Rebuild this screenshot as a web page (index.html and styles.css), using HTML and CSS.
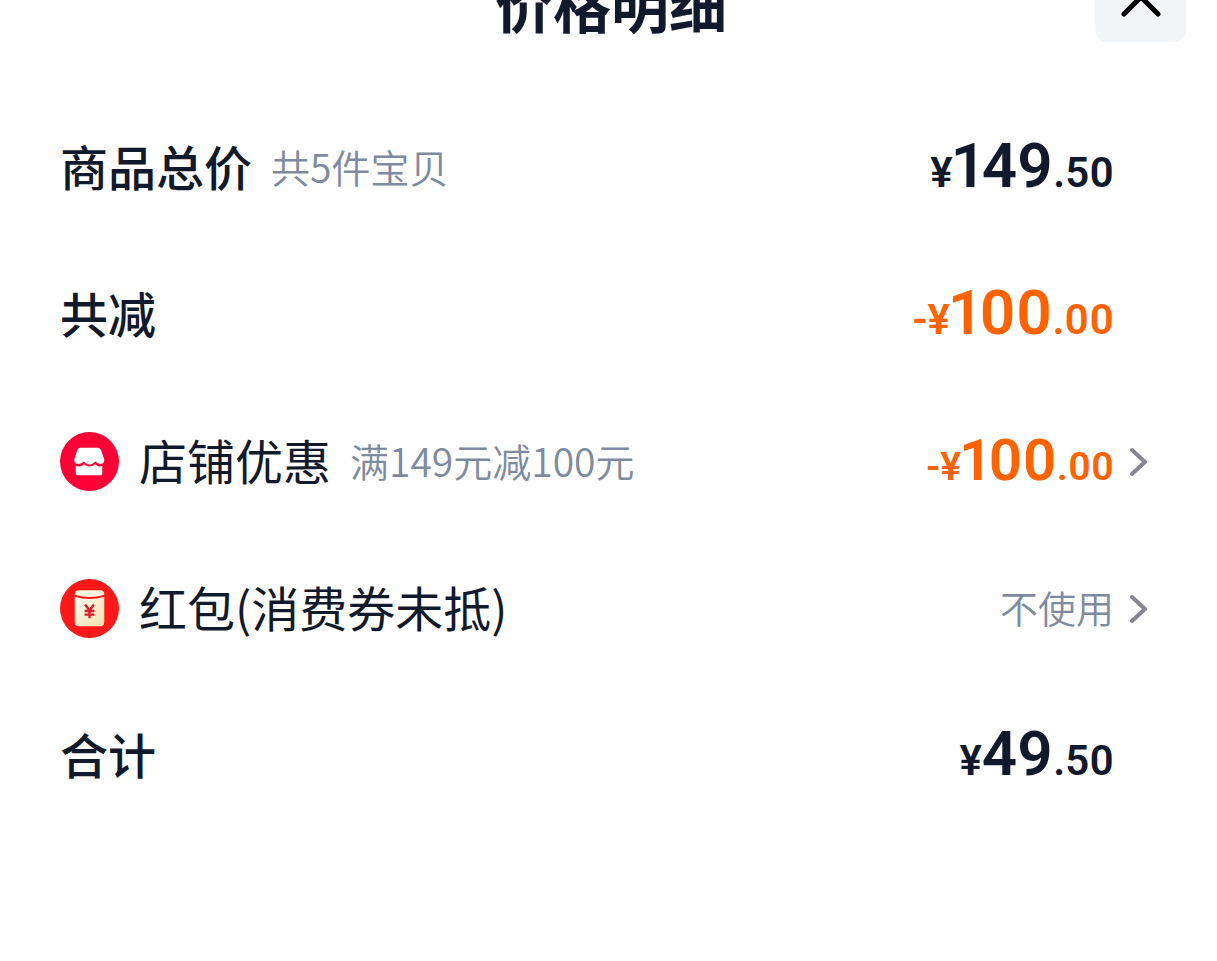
FILE: index.html
```html
<!DOCTYPE html>
<html lang="zh-CN">
<head>
<meta charset="utf-8">
<meta name="viewport" content="width=device-width, initial-scale=1">
<title>价格明细</title>
<link rel="stylesheet" href="styles.css">
</head>
<body>
<main class="sheet">
  <header class="header">
    <h1 class="title">价格明细</h1>
    <button class="close" type="button" aria-label="关闭">
      <svg class="close-icon" viewBox="0 0 44 44" aria-hidden="true"><path d="M5 5l34 34M39 5L5 39"/></svg>
    </button>
  </header>
  <ul class="rows">
    <li class="row">
      <span class="label strong">商品总价</span>
      <span class="note">共5件宝贝</span>
      <span class="price"><span class="yen">¥</span><span class="whole">149</span><span class="cents">.50</span></span>
    </li>
    <li class="row">
      <span class="label strong">共减</span>
      <span class="price discount"><span class="minus">-</span><span class="yen">¥</span><span class="whole">100</span><span class="cents">.00</span></span>
    </li>
    <li class="row">
      <svg class="badge" viewBox="0 0 60 60" aria-hidden="true">
        <circle cx="30" cy="30" r="30" fill="#ff0036"/>
        <path fill="#fff" d="M21 16h17q3 0 4 3l3 9q0 4.500-4 4.500-3 0-5.200-2.500-2.600 3-5.800 3t-5.800-3Q22 32.500 19 32.500q-5 0-4.500-4.500l2.900-9q.8-3 3.600-3z"/>
        <path fill="#fff" d="M16 34.500q5 1.500 8.500-1.800 5.500 4.600 11.200 0 3.600 3.300 7.300 1.800V42q0 2-2 2H18q-2 0-2-2z"/>
      </svg>
      <span class="label">店铺优惠</span>
      <span class="note">满149元减100元</span>
      <span class="price discount compact"><span class="minus">-</span><span class="yen">¥</span><span class="whole">100</span><span class="cents">.00</span></span>
      <button class="more" type="button" aria-label="查看店铺优惠"><svg class="chevron" viewBox="0 0 18 30" aria-hidden="true"><path d="M2 3l13 12L2 27"/></svg></button>
    </li>
    <li class="row">
      <svg class="badge" viewBox="0 0 60 60" aria-hidden="true">
        <defs><linearGradient id="paper" x1="0" y1="0" x2="1" y2="1"><stop offset="0" stop-color="#fffdf1"/><stop offset="1" stop-color="#f5dfae"/></linearGradient></defs>
        <circle cx="30" cy="30" r="30" fill="#ff1818"/>
        <path fill="url(#paper)" d="M15 18q15 4.500 30 0v26q0 4-4 4H19q-4 0-4-4z"/>
        <path fill="#fff6dc" d="M19 11.500h22q4 0 4 4V16q-15 4.500-30 0v-.5q0-4 4-4z"/>
        <path fill="none" stroke="#d91f2c" stroke-width="2.400" d="M25.500 26l4.500 6 4.500-6M30 32v8M25 32.500h10M25 36.200h10"/>
      </svg>
      <span class="label">红包(消费券未抵)</span>
      <span class="status">不使用</span>
      <button class="more" type="button" aria-label="选择红包"><svg class="chevron" viewBox="0 0 18 30" aria-hidden="true"><path d="M2 3l13 12L2 27"/></svg></button>
    </li>
    <li class="row">
      <span class="label strong">合计</span>
      <span class="price"><span class="yen">¥</span><span class="whole">49</span><span class="cents">.50</span></span>
    </li>
  </ul>
</main>
</body>
</html>
```
FILE: styles.css
```css
* { box-sizing: border-box; }
body {
  margin: 0;
  background: #fff;
  color: #11192d;
  font-family: "Noto Sans CJK SC", sans-serif;
}
.header {
  display: grid;
  grid-template-columns: 1fr auto 1fr;
  align-content: end;
  align-items: center;
  height: 42px;
  padding: 0 31px 0 36px;
  overflow: hidden;
}
.title {
  grid-column: 2;
  margin: 0;
  padding-top: 12px;
  font-size: 58px;
  line-height: 76px;
  font-weight: 700;
}
.close {
  justify-self: end;
  display: grid;
  place-items: center;
  width: 91px;
  height: 91px;
  padding: 0;
  border: 0;
  border-radius: 13px;
  background: #f1f5f8;
}
.close-icon {
  width: 44px;
  height: 44px;
  fill: none;
  stroke: #000;
  stroke-width: 5;
  stroke-linecap: round;
}
.rows {
  margin: 0;
  padding: 52px 69px 0 60px;
  list-style: none;
}
.row {
  display: flex;
  align-items: center;
  min-height: 147px;
  padding-right: 34px;
}
.row:has(.more) { padding-right: 0; }
.label {
  padding-bottom: 6px;
  font-size: 48px;
  line-height: 70px;
  font-weight: 400;
}
.strong { font-weight: 500; }
.note,
.status {
  padding-bottom: 3px;
  color: #7d8a9f;
  font-size: 39px;
  line-height: 58px;
  font-weight: 350;
}
.note { margin-left: 19px; }
.status {
  margin-left: auto;
  font-size: 38px;
}
.badge {
  flex: none;
  width: 59px;
  height: 59px;
  margin-right: 20px;
}
.price {
  display: flex;
  align-items: baseline;
  margin-left: auto;
  padding-top: 3px;
  font-family: Roboto, "Noto Sans CJK SC", sans-serif;
  font-size: 42px;
  line-height: 74px;
  font-weight: 600;
  font-variant-numeric: proportional-nums;
}
.whole { font-size: 62px; }
.compact { font-size: 39px; }
.compact .whole { font-size: 58px; }
.discount { color: #ff6200; }
.more {
  display: flex;
  justify-content: flex-end;
  width: 34px;
  padding: 0;
  border: 0;
  background: none;
}
.chevron {
  width: 18px;
  height: 30px;
  fill: none;
  stroke: #888491;
  stroke-width: 4;
  stroke-linecap: round;
  stroke-linejoin: round;
}
```
